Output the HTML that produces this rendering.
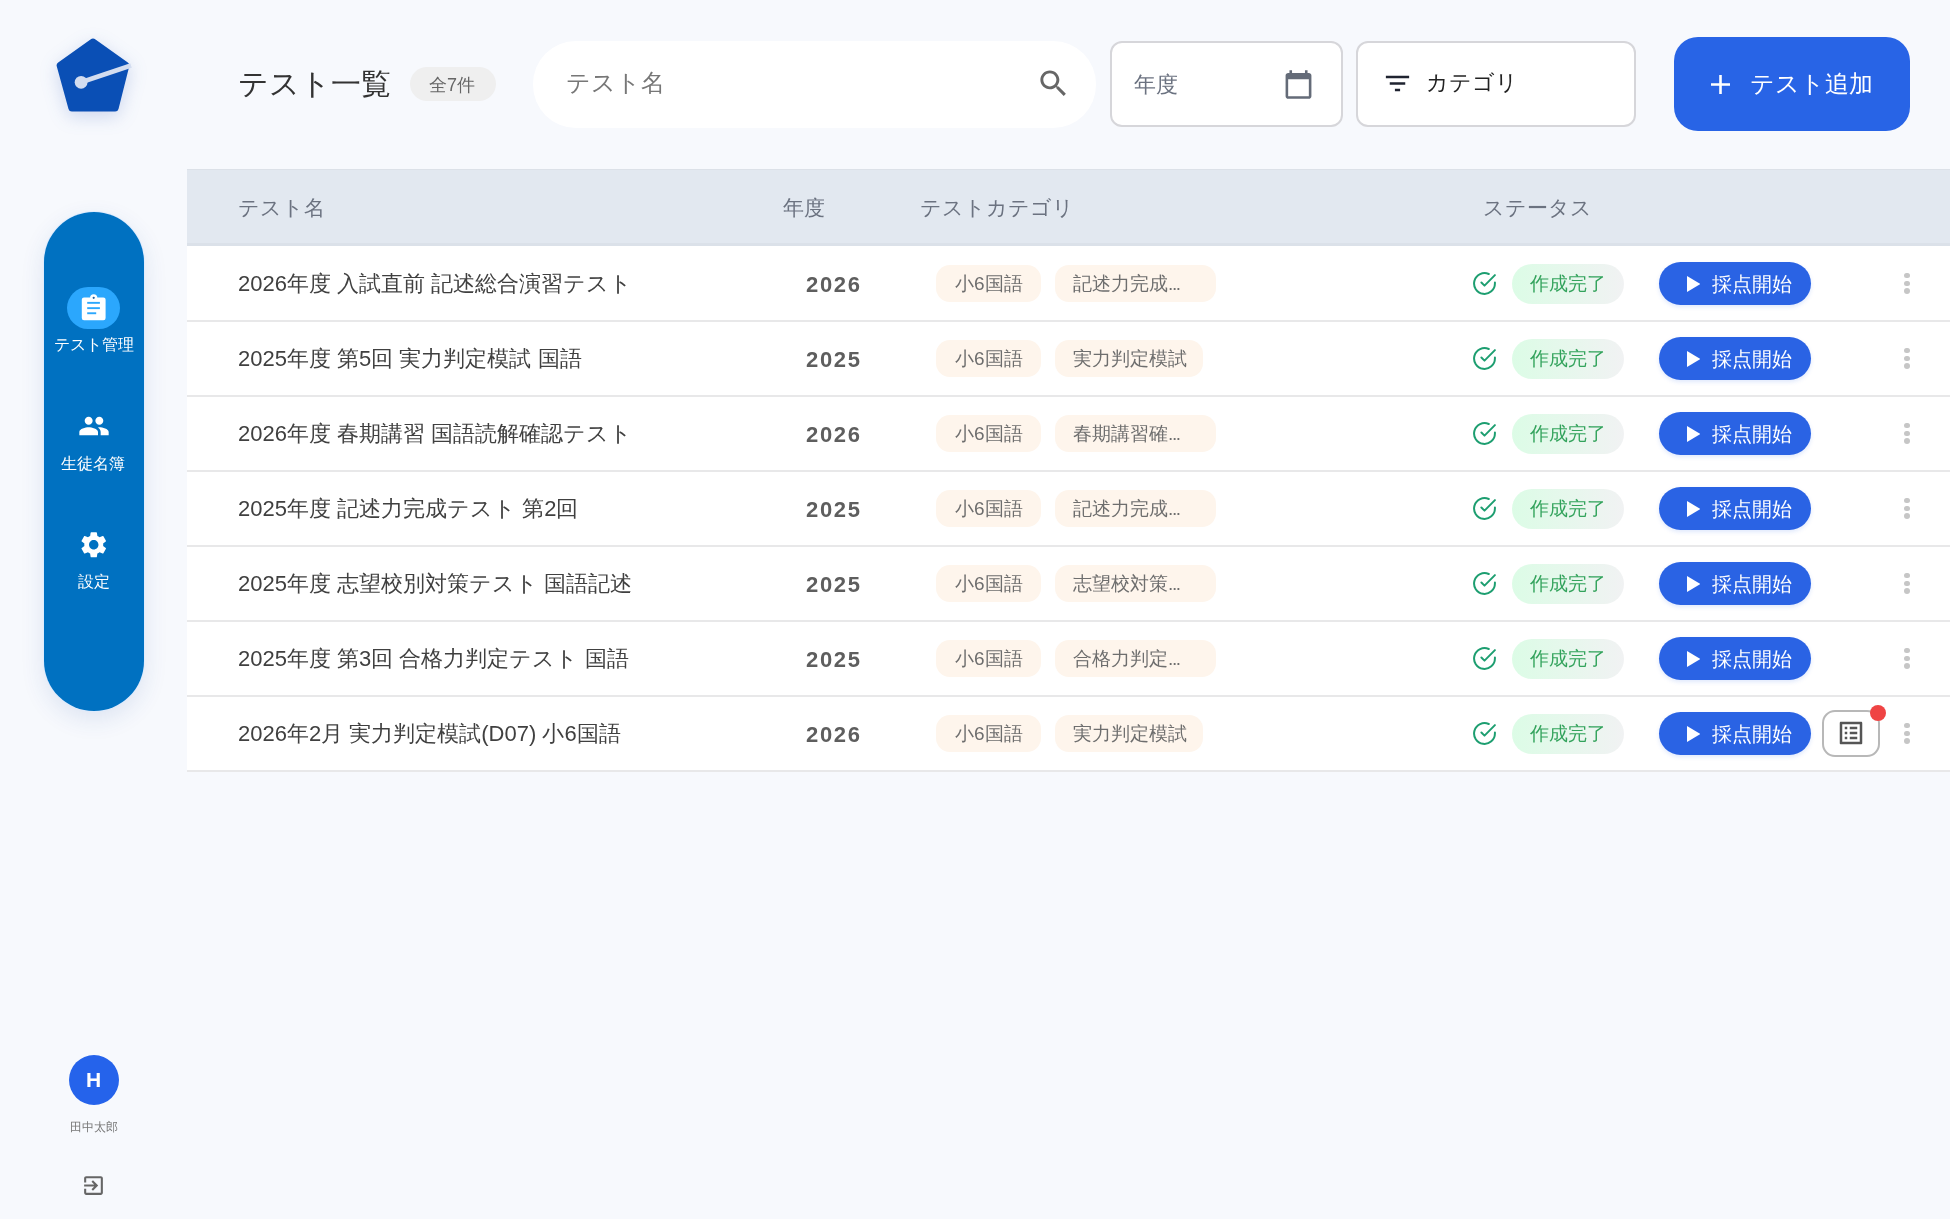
<!DOCTYPE html>
<html lang="ja">
<head>
<meta charset="utf-8">
<style>
*{box-sizing:border-box;margin:0;padding:0}
html,body{width:1950px;height:1219px;overflow:hidden}
body{background:#f7f9fd;font-family:"Liberation Sans",sans-serif;color:#333;position:relative}
.a{position:absolute}
.t{position:absolute;white-space:nowrap;line-height:1;will-change:transform}
svg{display:block}
.pill span,.spill span,#hh{will-change:transform}
.pill{height:37px;border-radius:14px;background:#fef5ec;color:#6e6e6e;font-size:19px;display:flex;align-items:center;justify-content:center;white-space:nowrap;line-height:1}
.spill{width:112px;height:40px;border-radius:20px;background:linear-gradient(90deg,#dcfce6,#f1f2f3);color:#33a35c;font-size:18.5px;display:flex;align-items:center;justify-content:center;white-space:nowrap;line-height:1}
.sbtn{width:152px;height:43px;border-radius:22px;background:#2a63e4;color:#fff;font-size:20px;display:flex;align-items:center;justify-content:center;white-space:nowrap;line-height:1;box-shadow:0 2px 4px rgba(37,99,235,.15)}
</style>
</head>
<body>
<!-- logo -->
<svg class="a" style="left:40px;top:20px;filter:drop-shadow(0 5px 9px rgba(40,80,180,.2))" width="110" height="110" viewBox="40 20 110 110">
  <path d="M90.5 39.5 Q93 37.6 95.5 39.5 L127.8 62.5 Q130 64 129.2 66.5 L118.5 109 Q117.8 111.6 115.2 111.6 L71.8 111.6 Q69.2 111.6 68.5 109 L56.8 66.5 Q56 64 58.2 62.5 Z" fill="#0a4fb5"/>
  <line x1="81" y1="82.3" x2="131" y2="65.5" stroke="#d3ddf0" stroke-width="4.6"/>
  <circle cx="81.1" cy="82.3" r="6.4" fill="#d3ddf0"/>
</svg>

<!-- title -->
<div class="t" id="title" style="left:238px;top:69px;font-size:30px;color:#333">テスト一覧</div>
<div class="a" style="left:410px;top:67px;width:86px;height:34px;border-radius:17px;background:#efefef"></div>
<div class="t" id="badge" style="left:429px;top:76px;font-size:18px;color:#666">全7件</div>

<!-- search -->
<div class="a" style="left:533px;top:41px;width:563px;height:87px;border-radius:43px;background:#fff"></div>
<div class="t" id="ph" style="left:566px;top:71px;font-size:24px;color:#777">テスト名</div>
<svg class="a" style="left:1036px;top:66px" width="35" height="35" viewBox="0 0 24 24"><path fill="#666" d="M15.5 14h-.79l-.28-.27C15.41 12.59 16 11.11 16 9.5 16 5.91 13.09 3 9.5 3S3 5.91 3 9.5 5.91 16 9.5 16c1.610 0 3.09-.59 4.23-1.57l.27.28v.79l5 4.99L20.49 19l-4.99-5zm-6 0C7.01 14 5 11.99 5 9.5S7.01 5 9.5 5 14 7.01 14 9.5 11.99 14 9.5 14z"/></svg>

<!-- year -->
<div class="a" style="left:1110px;top:41px;width:233px;height:86px;border-radius:12px;background:#fff;border:2px solid #d6d6da"></div>
<div class="t" id="yr" style="left:1134px;top:74px;font-size:22px;color:#6b7280">年度</div>
<svg class="a" style="left:1283px;top:69px" width="31" height="31" viewBox="0 0 24 24"><path fill="#646b78" d="M20 3h-1V1h-2v2H7V1H5v2H4c-1.1 0-2 .9-2 2v16c0 1.1.9 2 2 2h16c1.1 0 2-.9 2-2V5c0-1.1-.9-2-2-2zm0 18H4V8h16v13z"/></svg>

<!-- category -->
<div class="a" style="left:1356px;top:41px;width:280px;height:86px;border-radius:12px;background:#fff;border:2px solid #d6d6da"></div>
<svg class="a" style="left:1382px;top:68px" width="31" height="31" viewBox="0 0 24 24"><path fill="#1f2330" d="M10 18h4v-2h-4v2zM3 6v2h18V6H3zm3 7h12v-2H6v2z"/></svg>
<div class="t" id="cat" style="left:1426px;top:73px;font-size:21.5px;color:#222">カテゴリ</div>

<!-- add button -->
<div class="a" style="left:1674px;top:37px;width:236px;height:94px;border-radius:24px;background:#2864e6"></div>
<svg class="a" style="left:1710px;top:74px" width="21" height="21" viewBox="0 0 21 21"><path d="M10.5 1v19M1 10.5h19" stroke="#fff" stroke-width="2.6"/></svg>
<div class="t" id="add" style="left:1750px;top:72px;font-size:24px;color:#fff">テスト追加</div>

<!-- sidebar -->
<div class="a" style="left:44px;top:212px;width:100px;height:499px;border-radius:50px;background:#0071c1;box-shadow:0 0 0 1px rgba(220,235,255,.8),0 8px 24px rgba(30,70,160,.12)"></div>


<div class="a" style="left:187px;top:169px;width:1763px;height:77px;background:#e2e8f0;border-top:1px solid #dce1e8;border-bottom:3px solid #dbe1e9"></div>
<div class="t" id="h1" style="left:238px;top:197px;font-size:21px;color:#6b7280">テスト名</div>
<div class="t" id="h2" style="left:783px;top:197px;font-size:21px;color:#6b7280">年度</div>
<div class="t" id="h3" style="left:920px;top:197px;font-size:21px;color:#6b7280">テストカテゴリ</div>
<div class="t" id="h4" style="left:1483px;top:197px;font-size:21px;color:#6b7280">ステータス</div>
<div class="a" style="left:187px;top:246px;width:1763px;height:75px;background:#fff"></div>
<div class="t" id="r0t" style="left:238px;top:273px;font-size:22px;color:#404040">2026年度 入試直前 記述総合演習テスト</div>
<div class="t" id="r0y" style="left:806px;top:274px;font-size:22px;font-weight:bold;color:#5e5e5e;letter-spacing:1.7px">2026</div>
<div class="a pill" style="left:936px;top:265px;width:105px"><span>小6国語</span></div>
<div class="a pill" style="left:1055px;top:265px;width:161px;justify-content:flex-start;padding-left:18px"><span>記述力完成<i style="font-style:normal;letter-spacing:-1.4px">...</i></span></div>
<svg class="a" style="left:1471.5px;top:271px" width="25" height="25" viewBox="0 0 24 24" fill="none" stroke="#1d9e70" stroke-width="1.9" stroke-linecap="round" stroke-linejoin="round"><path d="M22 11.08V12a10 10 0 1 1-5.93-9.14" /><path d="M9 11l3 3L22 4"/></svg>
<div class="a spill" style="left:1512px;top:264px"><span>作成完了</span></div>
<div class="a sbtn" style="left:1659px;top:262px"></div>
<svg class="a" style="left:1686.5px;top:276px" width="13.5" height="16" viewBox="0 0 13.5 16"><path d="M0 0L13.5 8L0 16Z" fill="#fff"/></svg>
<div class="t" id="b0" style="left:1712px;top:274px;font-size:20px;color:#fff">採点開始</div>
<div class="a" style="left:1904.3px;top:272.7px;width:5.5px;height:5.5px;border-radius:3px;background:#c6c6c6"></div>
<div class="a" style="left:1904.3px;top:280.5px;width:5.5px;height:5.5px;border-radius:3px;background:#c6c6c6"></div>
<div class="a" style="left:1904.3px;top:288.3px;width:5.5px;height:5.5px;border-radius:3px;background:#c6c6c6"></div>
<div class="a" style="left:187px;top:321px;width:1763px;height:75px;background:#fff"></div>
<div class="t" id="r1t" style="left:238px;top:348px;font-size:22px;color:#404040">2025年度 第5回 実力判定模試 国語</div>
<div class="t" id="r1y" style="left:806px;top:349px;font-size:22px;font-weight:bold;color:#5e5e5e;letter-spacing:1.7px">2025</div>
<div class="a pill" style="left:936px;top:340px;width:105px"><span>小6国語</span></div>
<div class="a pill" style="left:1055px;top:340px;width:148px;justify-content:flex-start;padding-left:18px"><span>実力判定模試</span></div>
<svg class="a" style="left:1471.5px;top:346px" width="25" height="25" viewBox="0 0 24 24" fill="none" stroke="#1d9e70" stroke-width="1.9" stroke-linecap="round" stroke-linejoin="round"><path d="M22 11.08V12a10 10 0 1 1-5.93-9.14" /><path d="M9 11l3 3L22 4"/></svg>
<div class="a spill" style="left:1512px;top:339px"><span>作成完了</span></div>
<div class="a sbtn" style="left:1659px;top:337px"></div>
<svg class="a" style="left:1686.5px;top:351px" width="13.5" height="16" viewBox="0 0 13.5 16"><path d="M0 0L13.5 8L0 16Z" fill="#fff"/></svg>
<div class="t" id="b1" style="left:1712px;top:349px;font-size:20px;color:#fff">採点開始</div>
<div class="a" style="left:1904.3px;top:347.7px;width:5.5px;height:5.5px;border-radius:3px;background:#c6c6c6"></div>
<div class="a" style="left:1904.3px;top:355.5px;width:5.5px;height:5.5px;border-radius:3px;background:#c6c6c6"></div>
<div class="a" style="left:1904.3px;top:363.3px;width:5.5px;height:5.5px;border-radius:3px;background:#c6c6c6"></div>
<div class="a" style="left:187px;top:396px;width:1763px;height:75px;background:#fff"></div>
<div class="t" id="r2t" style="left:238px;top:423px;font-size:22px;color:#404040">2026年度 春期講習 国語読解確認テスト</div>
<div class="t" id="r2y" style="left:806px;top:424px;font-size:22px;font-weight:bold;color:#5e5e5e;letter-spacing:1.7px">2026</div>
<div class="a pill" style="left:936px;top:415px;width:105px"><span>小6国語</span></div>
<div class="a pill" style="left:1055px;top:415px;width:161px;justify-content:flex-start;padding-left:18px"><span>春期講習確<i style="font-style:normal;letter-spacing:-1.4px">...</i></span></div>
<svg class="a" style="left:1471.5px;top:421px" width="25" height="25" viewBox="0 0 24 24" fill="none" stroke="#1d9e70" stroke-width="1.9" stroke-linecap="round" stroke-linejoin="round"><path d="M22 11.08V12a10 10 0 1 1-5.93-9.14" /><path d="M9 11l3 3L22 4"/></svg>
<div class="a spill" style="left:1512px;top:414px"><span>作成完了</span></div>
<div class="a sbtn" style="left:1659px;top:412px"></div>
<svg class="a" style="left:1686.5px;top:426px" width="13.5" height="16" viewBox="0 0 13.5 16"><path d="M0 0L13.5 8L0 16Z" fill="#fff"/></svg>
<div class="t" id="b2" style="left:1712px;top:424px;font-size:20px;color:#fff">採点開始</div>
<div class="a" style="left:1904.3px;top:422.7px;width:5.5px;height:5.5px;border-radius:3px;background:#c6c6c6"></div>
<div class="a" style="left:1904.3px;top:430.5px;width:5.5px;height:5.5px;border-radius:3px;background:#c6c6c6"></div>
<div class="a" style="left:1904.3px;top:438.3px;width:5.5px;height:5.5px;border-radius:3px;background:#c6c6c6"></div>
<div class="a" style="left:187px;top:471px;width:1763px;height:75px;background:#fff"></div>
<div class="t" id="r3t" style="left:238px;top:498px;font-size:22px;color:#404040">2025年度 記述力完成テスト 第2回</div>
<div class="t" id="r3y" style="left:806px;top:499px;font-size:22px;font-weight:bold;color:#5e5e5e;letter-spacing:1.7px">2025</div>
<div class="a pill" style="left:936px;top:490px;width:105px"><span>小6国語</span></div>
<div class="a pill" style="left:1055px;top:490px;width:161px;justify-content:flex-start;padding-left:18px"><span>記述力完成<i style="font-style:normal;letter-spacing:-1.4px">...</i></span></div>
<svg class="a" style="left:1471.5px;top:496px" width="25" height="25" viewBox="0 0 24 24" fill="none" stroke="#1d9e70" stroke-width="1.9" stroke-linecap="round" stroke-linejoin="round"><path d="M22 11.08V12a10 10 0 1 1-5.93-9.14" /><path d="M9 11l3 3L22 4"/></svg>
<div class="a spill" style="left:1512px;top:489px"><span>作成完了</span></div>
<div class="a sbtn" style="left:1659px;top:487px"></div>
<svg class="a" style="left:1686.5px;top:501px" width="13.5" height="16" viewBox="0 0 13.5 16"><path d="M0 0L13.5 8L0 16Z" fill="#fff"/></svg>
<div class="t" id="b3" style="left:1712px;top:499px;font-size:20px;color:#fff">採点開始</div>
<div class="a" style="left:1904.3px;top:497.7px;width:5.5px;height:5.5px;border-radius:3px;background:#c6c6c6"></div>
<div class="a" style="left:1904.3px;top:505.5px;width:5.5px;height:5.5px;border-radius:3px;background:#c6c6c6"></div>
<div class="a" style="left:1904.3px;top:513.3px;width:5.5px;height:5.5px;border-radius:3px;background:#c6c6c6"></div>
<div class="a" style="left:187px;top:546px;width:1763px;height:75px;background:#fff"></div>
<div class="t" id="r4t" style="left:238px;top:573px;font-size:22px;color:#404040">2025年度 志望校別対策テスト 国語記述</div>
<div class="t" id="r4y" style="left:806px;top:574px;font-size:22px;font-weight:bold;color:#5e5e5e;letter-spacing:1.7px">2025</div>
<div class="a pill" style="left:936px;top:565px;width:105px"><span>小6国語</span></div>
<div class="a pill" style="left:1055px;top:565px;width:161px;justify-content:flex-start;padding-left:18px"><span>志望校対策<i style="font-style:normal;letter-spacing:-1.4px">...</i></span></div>
<svg class="a" style="left:1471.5px;top:571px" width="25" height="25" viewBox="0 0 24 24" fill="none" stroke="#1d9e70" stroke-width="1.9" stroke-linecap="round" stroke-linejoin="round"><path d="M22 11.08V12a10 10 0 1 1-5.93-9.14" /><path d="M9 11l3 3L22 4"/></svg>
<div class="a spill" style="left:1512px;top:564px"><span>作成完了</span></div>
<div class="a sbtn" style="left:1659px;top:562px"></div>
<svg class="a" style="left:1686.5px;top:576px" width="13.5" height="16" viewBox="0 0 13.5 16"><path d="M0 0L13.5 8L0 16Z" fill="#fff"/></svg>
<div class="t" id="b4" style="left:1712px;top:574px;font-size:20px;color:#fff">採点開始</div>
<div class="a" style="left:1904.3px;top:572.7px;width:5.5px;height:5.5px;border-radius:3px;background:#c6c6c6"></div>
<div class="a" style="left:1904.3px;top:580.5px;width:5.5px;height:5.5px;border-radius:3px;background:#c6c6c6"></div>
<div class="a" style="left:1904.3px;top:588.3000000000001px;width:5.5px;height:5.5px;border-radius:3px;background:#c6c6c6"></div>
<div class="a" style="left:187px;top:621px;width:1763px;height:75px;background:#fff"></div>
<div class="t" id="r5t" style="left:238px;top:648px;font-size:22px;color:#404040">2025年度 第3回 合格力判定テスト 国語</div>
<div class="t" id="r5y" style="left:806px;top:649px;font-size:22px;font-weight:bold;color:#5e5e5e;letter-spacing:1.7px">2025</div>
<div class="a pill" style="left:936px;top:640px;width:105px"><span>小6国語</span></div>
<div class="a pill" style="left:1055px;top:640px;width:161px;justify-content:flex-start;padding-left:18px"><span>合格力判定<i style="font-style:normal;letter-spacing:-1.4px">...</i></span></div>
<svg class="a" style="left:1471.5px;top:646px" width="25" height="25" viewBox="0 0 24 24" fill="none" stroke="#1d9e70" stroke-width="1.9" stroke-linecap="round" stroke-linejoin="round"><path d="M22 11.08V12a10 10 0 1 1-5.93-9.14" /><path d="M9 11l3 3L22 4"/></svg>
<div class="a spill" style="left:1512px;top:639px"><span>作成完了</span></div>
<div class="a sbtn" style="left:1659px;top:637px"></div>
<svg class="a" style="left:1686.5px;top:651px" width="13.5" height="16" viewBox="0 0 13.5 16"><path d="M0 0L13.5 8L0 16Z" fill="#fff"/></svg>
<div class="t" id="b5" style="left:1712px;top:649px;font-size:20px;color:#fff">採点開始</div>
<div class="a" style="left:1904.3px;top:647.7px;width:5.5px;height:5.5px;border-radius:3px;background:#c6c6c6"></div>
<div class="a" style="left:1904.3px;top:655.5px;width:5.5px;height:5.5px;border-radius:3px;background:#c6c6c6"></div>
<div class="a" style="left:1904.3px;top:663.3000000000001px;width:5.5px;height:5.5px;border-radius:3px;background:#c6c6c6"></div>
<div class="a" style="left:187px;top:696px;width:1763px;height:75px;background:#fff"></div>
<div class="t" id="r6t" style="left:238px;top:723px;font-size:22px;color:#404040">2026年2月 実力判定模試(D07) 小6国語</div>
<div class="t" id="r6y" style="left:806px;top:724px;font-size:22px;font-weight:bold;color:#5e5e5e;letter-spacing:1.7px">2026</div>
<div class="a pill" style="left:936px;top:715px;width:105px"><span>小6国語</span></div>
<div class="a pill" style="left:1055px;top:715px;width:148px;justify-content:flex-start;padding-left:18px"><span>実力判定模試</span></div>
<svg class="a" style="left:1471.5px;top:721px" width="25" height="25" viewBox="0 0 24 24" fill="none" stroke="#1d9e70" stroke-width="1.9" stroke-linecap="round" stroke-linejoin="round"><path d="M22 11.08V12a10 10 0 1 1-5.93-9.14" /><path d="M9 11l3 3L22 4"/></svg>
<div class="a spill" style="left:1512px;top:714px"><span>作成完了</span></div>
<div class="a sbtn" style="left:1659px;top:712px"></div>
<svg class="a" style="left:1686.5px;top:726px" width="13.5" height="16" viewBox="0 0 13.5 16"><path d="M0 0L13.5 8L0 16Z" fill="#fff"/></svg>
<div class="t" id="b6" style="left:1712px;top:724px;font-size:20px;color:#fff">採点開始</div>
<div class="a" style="left:1904.3px;top:722.7px;width:5.5px;height:5.5px;border-radius:3px;background:#c6c6c6"></div>
<div class="a" style="left:1904.3px;top:730.5px;width:5.5px;height:5.5px;border-radius:3px;background:#c6c6c6"></div>
<div class="a" style="left:1904.3px;top:738.3000000000001px;width:5.5px;height:5.5px;border-radius:3px;background:#c6c6c6"></div>
<div class="a" style="left:1822px;top:710px;width:58px;height:47px;border:2px solid #b8b8b8;border-radius:13px;background:#fff"></div>
<svg class="a" style="left:1836px;top:718px" width="30" height="30" viewBox="0 0 24 24"><path fill="#555" d="M19 5v14H5V5h14m1.1-2H3.9c-.5 0-.9.4-.9.9v16.2c0 .4.4.9.9.9h16.2c.4 0 .9-.5.9-.9V3.9c0-.5-.5-.9-.9-.9zM11 7h6v2h-6V7zm0 4h6v2h-6v-2zm0 4h6v2h-6zM7 7h2v2H7zm0 4h2v2H7zm0 4h2v2H7z"/></svg>
<div class="a" style="left:1870px;top:705px;width:16px;height:16px;border-radius:8px;background:#ef4444"></div>
<div class="a" style="left:187px;top:320px;width:1763px;height:2px;background:#e8e8e9"></div>
<div class="a" style="left:187px;top:395px;width:1763px;height:2px;background:#e8e8e9"></div>
<div class="a" style="left:187px;top:470px;width:1763px;height:2px;background:#e8e8e9"></div>
<div class="a" style="left:187px;top:545px;width:1763px;height:2px;background:#e8e8e9"></div>
<div class="a" style="left:187px;top:620px;width:1763px;height:2px;background:#e8e8e9"></div>
<div class="a" style="left:187px;top:695px;width:1763px;height:2px;background:#e8e8e9"></div>
<div class="a" style="left:187px;top:770px;width:1763px;height:2px;background:#e8e8e9"></div>

<!-- sidebar content -->
<div class="a" style="left:67px;top:287px;width:53px;height:42px;border-radius:21px;background:#2ba7fd"></div>
<svg class="a" style="left:60px;top:280px" width="70" height="60" viewBox="60 280 70 60"><rect x="81.8" y="297.6" width="23.8" height="22.6" rx="2.2" fill="#fff"/><circle cx="93.7" cy="297.8" r="3.6" fill="#fff"/><circle cx="93.7" cy="297.8" r="1.1" fill="#1f5f9f"/><g fill="#2ba7fd"><rect x="87.2" y="301.9" width="12.7" height="1.9"/><rect x="87.2" y="307.2" width="12.7" height="1.9"/><rect x="87.2" y="312.3" width="9" height="1.9"/></g></svg>
<div class="t" id="nav1" style="left:53.5px;top:337px;font-size:16px;color:#fff">テスト管理</div>
<svg class="a" style="left:78px;top:410px" width="32" height="32" viewBox="0 0 24 24"><path fill="#fff" d="M16 11c1.66 0 2.99-1.34 2.99-3S17.66 5 16 5c-1.66 0-3 1.34-3 3s1.34 3 3 3zm-8 0c1.66 0 2.99-1.34 2.99-3S9.66 5 8 5C6.34 5 5 6.34 5 8s1.34 3 3 3zm0 2c-2.33 0-7 1.17-7 3.5V19h14v-2.5c0-2.330-4.67-3.5-7-3.5zm8 0c-.29 0-.62.02-.97.05 1.16.84 1.97 1.97 1.97 3.45V19h6v-2.5c0-2.33-4.67-3.5-7-3.5z"/></svg>
<div class="t" id="nav2" style="left:61px;top:456px;font-size:16px;color:#fff">生徒名簿</div>
<svg class="a" style="left:77.7px;top:529px" width="31.5" height="31.5" viewBox="0 0 24 24"><path fill="#fff" d="M19.14 12.94c.04-.3.06-.61.06-.94 0-.32-.02-.64-.07-.94l2.03-1.58c.18-.14.23-.41.12-.61l-1.92-3.32c-.12-.22-.37-.29-.59-.22l-2.39.96c-.5-.38-1.03-.7-1.62-.94l-.36-2.54c-.04-.24-.24-.41-.48-.41h-3.840c-.24 0-.43.17-.47.41l-.36 2.54c-.59.24-1.13.57-1.62.94l-2.39-.96c-.22-.08-.47 0-.59.22L2.74 8.87c-.12.21-.08.47.12.61l2.03 1.58c-.05.3-.09.63-.09.94s.02.64.07.94l-2.03 1.58c-.18.14-.23.41-.12.61l1.92 3.32c.12.22.37.29.59.22l2.39-.96c.5.38 1.03.7 1.62.94l.36 2.54c.05.24.24.41.48.41h3.84c.24 0 .44-.17.47-.41l.36-2.54c.59-.24 1.13-.56 1.62-.94l2.39.96c.22.08.47 0 .59-.22l1.92-3.32c.12-.22.07-.47-.12-.61l-2.01-1.58zM12 15.6c-1.98 0-3.6-1.62-3.6-3.6s1.62-3.6 3.6-3.6 3.6 1.62 3.6 3.6-1.62 3.6-3.6 3.6z"/></svg>
<div class="t" id="nav3" style="left:77.5px;top:574px;font-size:16px;color:#fff">設定</div>

<!-- user -->
<div class="a" style="left:69px;top:1055px;width:50px;height:50px;border-radius:25px;background:#2563eb;color:#fff;font-size:21px;font-weight:bold;padding-bottom:2px;padding-right:1px;display:flex;align-items:center;justify-content:center;line-height:1"><span id="hh">H</span></div>
<div class="t" id="uname" style="left:69.5px;top:1121px;font-size:12.2px;color:#777">田中太郎</div>
<svg class="a" style="left:81px;top:1173px" width="25" height="25" viewBox="0 0 24 24"><path fill="#666" d="M10.09 15.59L11.5 17l5-5-5-5-1.41 1.41L12.67 11H3v2h9.67l-2.58 2.59zM19 3H5c-1.11 0-2 .9-2 2v4h2V5h14v14H5v-4H3v4c0 1.1.89 2 2 2h14c1.1 0 2-.9 2-2V5c0-1.1-.9-2-2-2z"/></svg>
</body>
</html>
